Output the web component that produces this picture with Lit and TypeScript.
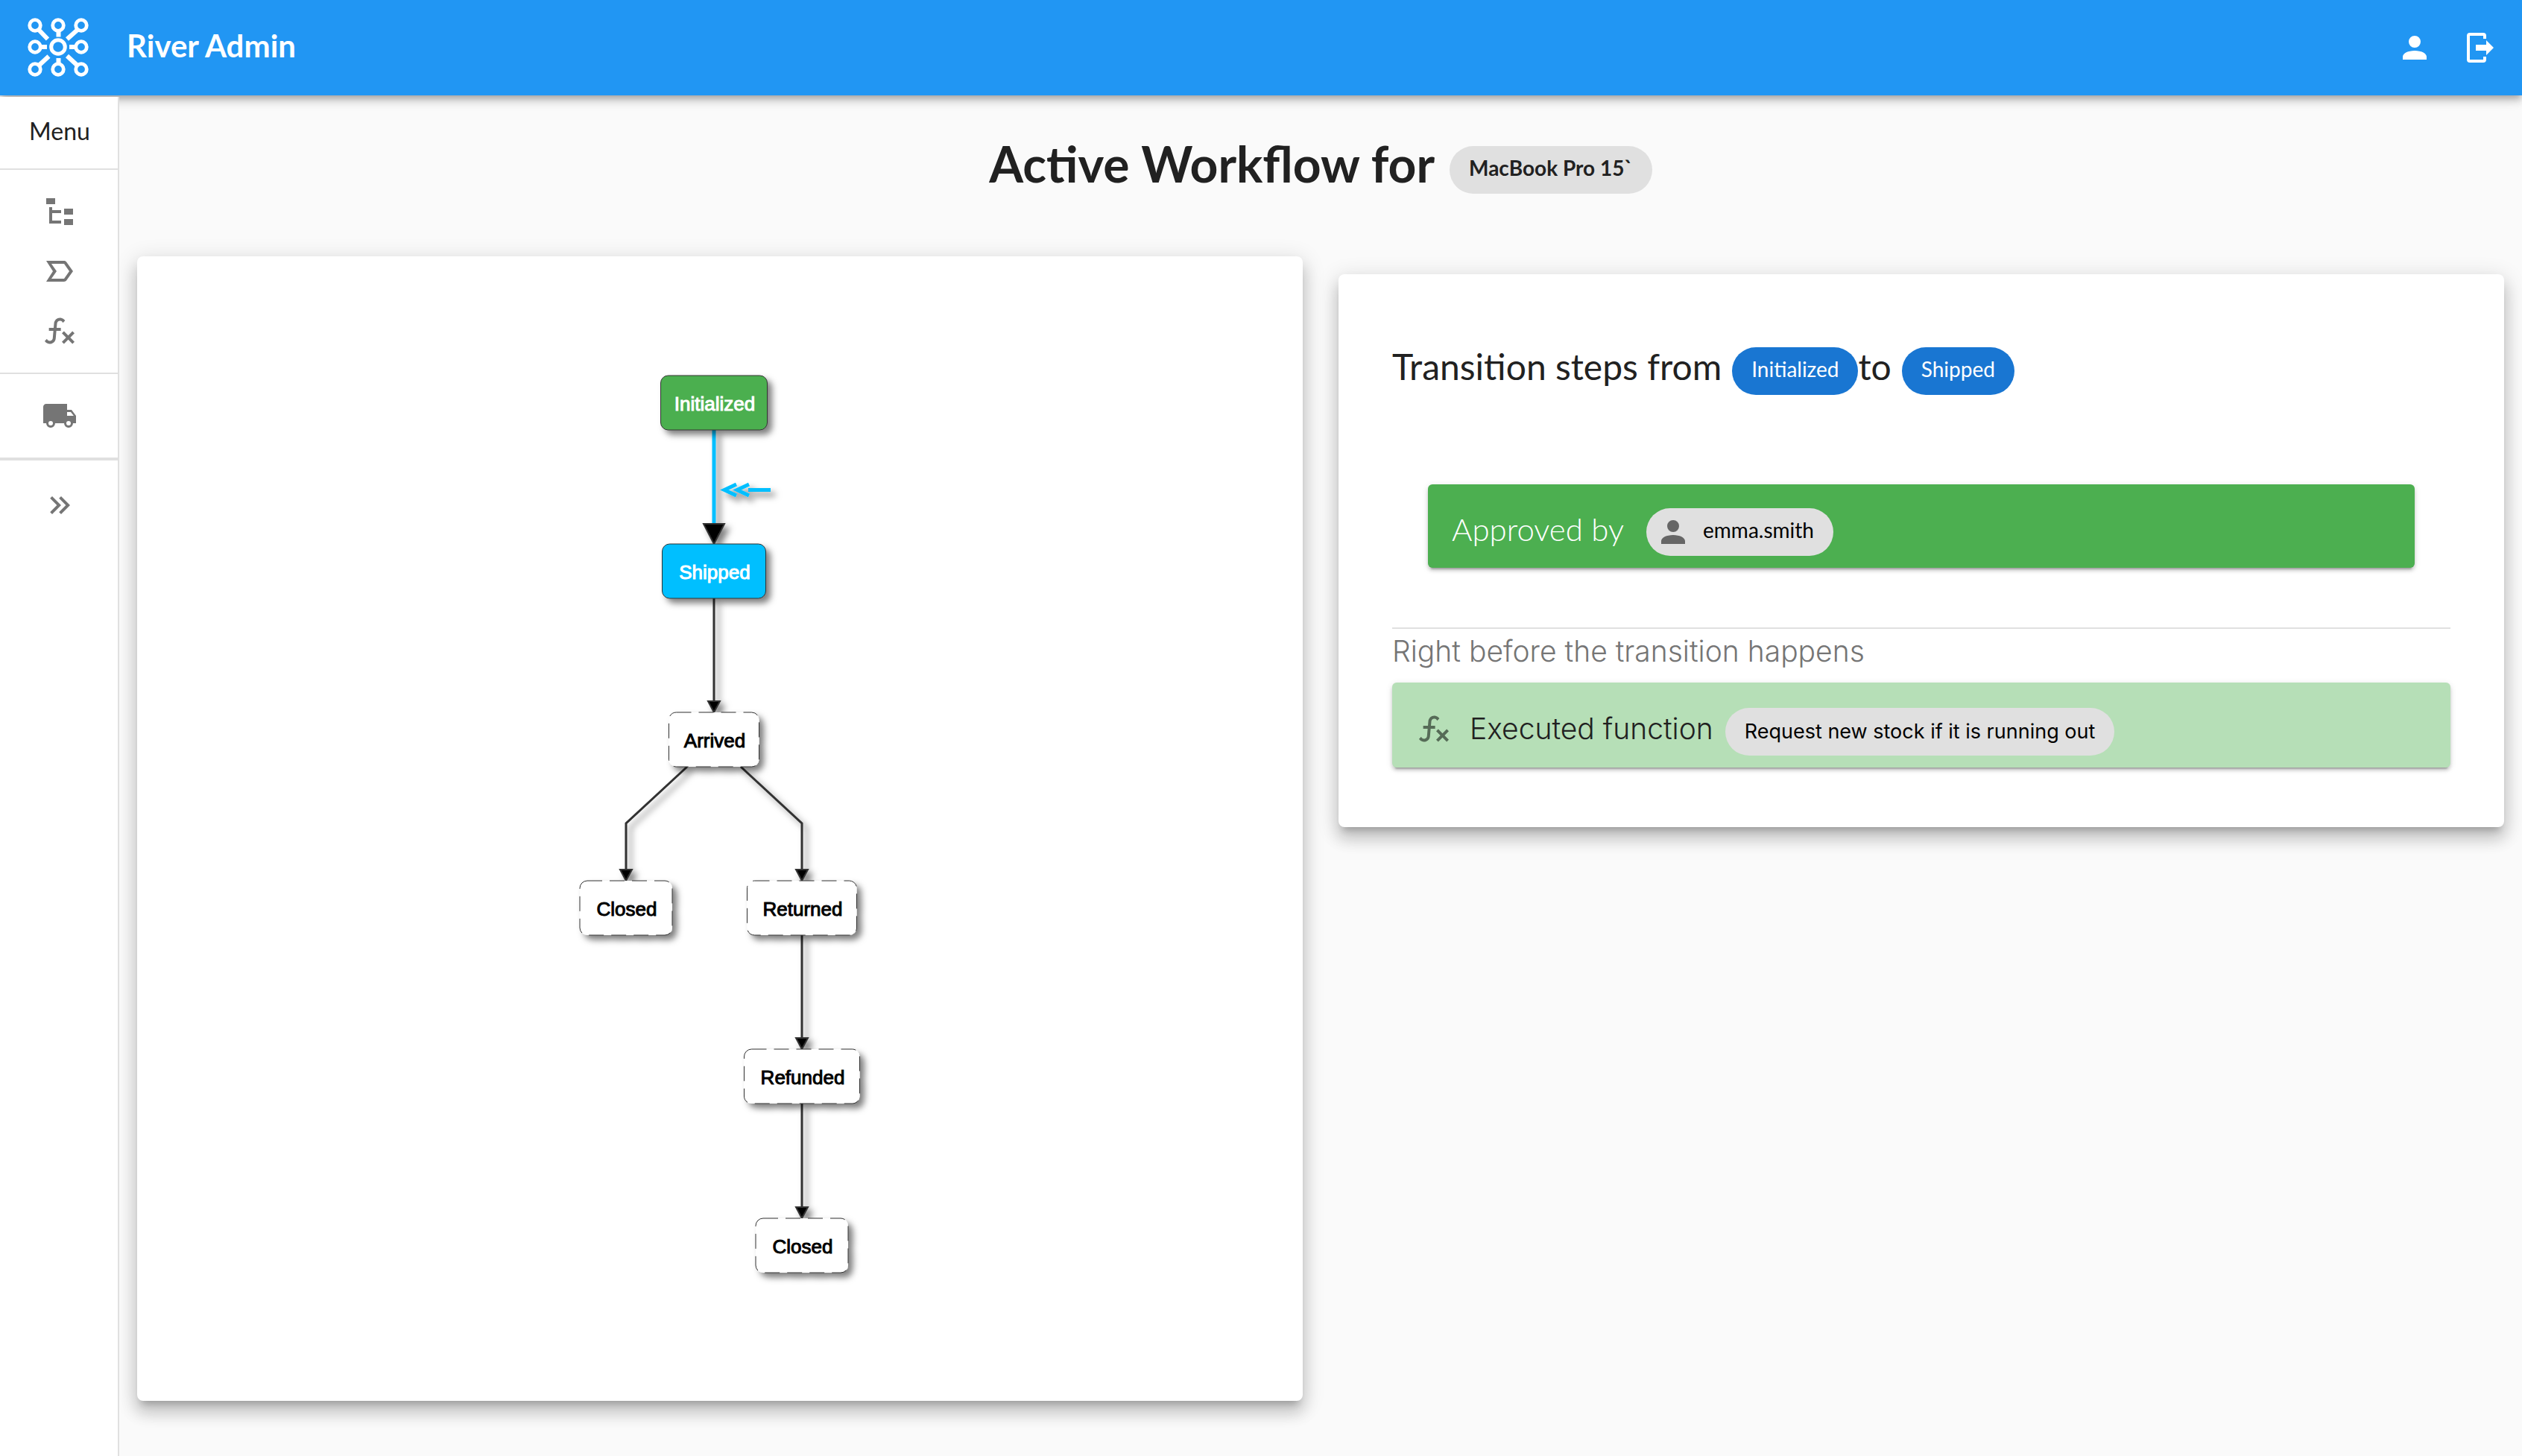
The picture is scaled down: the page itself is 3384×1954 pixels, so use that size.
import { LitElement, html, svg, css } from "lit";
import { customElement, property } from "lit/decorators.js";
import { classMap } from "lit/directives/class-map.js";

const ICONS = {
  account:
    "M12,4A4,4 0 0,1 16,8A4,4 0 0,1 12,12A4,4 0 0,1 8,8A4,4 0 0,1 12,4M12,14C16.42,14 20,15.79 20,18V20H4V18C4,15.79 7.58,14 12,14Z",
  logout:
    "M16,17V14H9V10H16V7L21,12L16,17M14,2A2,2 0 0,1 16,4V6H14V4H5V20H14V18H16V20A2,2 0 0,1 14,22H5A2,2 0 0,1 3,20V4A2,2 0 0,1 5,2H14Z",
  tree: "M3,3H9V7H3V3M15,10H21V14H15V10M15,17H21V21H15V17M13,13H7V18H13V20H5V9H7V11H13V13Z",
  label:
    "M3,5H15C15.65,5 16.26,5.31 16.63,5.84L21,12L16.63,18.16C16.26,18.69 15.65,19 15,19H3L7.5,12L3,5M6.5,7L10,12L6.5,17H15L18.5,12L15,7H6.5Z",
  fn: "M12.42,5.29C11.32,5.19 10.35,6 10.25,7.11L10,10H12.82V12H9.82L9.38,17.07C9.18,19.27 7.24,20.9 5.04,20.7C3.79,20.59 2.66,19.9 2,18.83L3.5,17.33C3.83,18.38 4.96,18.97 6,18.63C6.78,18.39 7.33,17.7 7.4,16.89L7.82,12H4.82V10H8L8.27,6.93C8.46,4.73 10.39,3.1 12.6,3.28C13.86,3.39 15,4.09 15.66,5.17L14.16,6.67C13.91,5.9 13.23,5.36 12.42,5.29M22,13.65L20.59,12.24L17.76,15.07L14.93,12.24L13.5,13.65L16.35,16.5L13.5,19.33L14.93,20.74L17.76,17.91L20.59,20.74L22,19.33L19.17,16.5L22,13.65Z",
  truck:
    "M18,18.5A1.5,1.5 0 0,0 19.5,17A1.5,1.5 0 0,0 18,15.5A1.5,1.5 0 0,0 16.5,17A1.5,1.5 0 0,0 18,18.5M19.5,9.5H17V12H21.46L19.5,9.5M6,18.5A1.5,1.5 0 0,0 7.5,17A1.5,1.5 0 0,0 6,15.5A1.5,1.5 0 0,0 4.5,17A1.5,1.5 0 0,0 6,18.5M20,8L23,12V17H21A3,3 0 0,1 18,20A3,3 0 0,1 15,17H9A3,3 0 0,1 6,20A3,3 0 0,1 3,17H1V6C1,4.89 1.89,4 3,4H17V8H20Z",
  expand:
    "M5.59,7.41L7,6L13,12L7,18L5.59,16.59L10.17,12L5.59,7.41M11.59,7.41L13,6L19,12L13,18L11.59,16.59L16.17,12L11.59,7.41Z",
};
type IconName = keyof typeof ICONS;

const icon = (name: IconName) => html`<svg class="icon" viewBox="0 0 24 24" aria-hidden="true">
  <path fill="currentColor" fill-rule="evenodd" d=${ICONS[name]} />
</svg>`;

interface FlowNode {
  label: string;
  x: number;
  y: number;
  w: number;
  kind: "done" | "current" | "pending";
}
interface FlowEdge {
  d: string;
  tip: [number, number];
  active?: boolean;
}

const NODE_HEIGHT = 73;
const NODES: FlowNode[] = [
  { label: "Initialized", x: 774, y: 160, w: 143, kind: "done" },
  { label: "Shipped", x: 774, y: 386, w: 139, kind: "current" },
  { label: "Arrived", x: 774, y: 612, w: 121, kind: "pending" },
  { label: "Closed", x: 656, y: 838, w: 124, kind: "pending" },
  { label: "Returned", x: 892, y: 838, w: 147, kind: "pending" },
  { label: "Refunded", x: 892, y: 1064, w: 155, kind: "pending" },
  { label: "Closed", x: 892, y: 1291, w: 124, kind: "pending" },
];
const EDGES: FlowEdge[] = [
  { d: "M774,233V360", tip: [774, 386], active: true },
  { d: "M774,459V598", tip: [774, 612] },
  { d: "M738,685L656,761V824", tip: [656, 838] },
  { d: "M810,685L892,761V824", tip: [892, 838] },
  { d: "M892,911V1050", tip: [892, 1064] },
  { d: "M892,1137V1276", tip: [892, 1291] },
];

@customElement("workflow-graph")
export class WorkflowGraph extends LitElement {
  @property({ attribute: false }) nodes: FlowNode[] = [];
  @property({ attribute: false }) edges: FlowEdge[] = [];

  static styles = css`
    :host {
      display: block;
    }
    .canvas {
      display: block;
      width: 100%;
      height: auto;
    }
    .edge {
      fill: none;
      stroke: #333;
      stroke-width: 3px;
    }
    .edge.active,
    .marker {
      fill: none;
      stroke: #00bfff;
      stroke-width: 5px;
    }
    .head {
      fill: #000;
      stroke: #333;
      stroke-width: 2px;
    }
    .box {
      stroke: #333;
      stroke-width: 1px;
    }
    .done .box {
      fill: #4caf50;
    }
    .current .box {
      fill: #00bfff;
    }
    .pending .box {
      fill: #fff;
      stroke-dasharray: 20 10;
    }
    .label {
      font: 400 26px "Liberation Sans", Arial, sans-serif;
      text-anchor: middle;
      fill: #000;
      stroke: #000;
      stroke-width: 1px;
    }
    .done .label,
    .current .label {
      fill: #fff;
      stroke: #fff;
    }
  `;

  private edge({ d, tip: [x, y], active }: FlowEdge) {
    const half = active ? 14 : 8;
    const length = active ? 27 : 15;
    return svg`<g filter="url(#shadow)">
      <path class=${classMap({ edge: true, active: !!active })} d=${d}></path>
      <path class="head" d=${`M${x - half},${y - length}H${x + half}L${x},${y}Z`}></path>
    </g>`;
  }

  private node({ label, x, y, w, kind }: FlowNode) {
    return svg`<g class=${kind}>
      <rect class="box" filter="url(#shadow)" x=${x - w / 2} y=${y} width=${w} height=${NODE_HEIGHT} rx="10"></rect>
      <text class="label" x=${x + 1} y=${y + 47}>${label}</text>
    </g>`;
  }

  render() {
    return html`<svg class="canvas" viewBox="0 0 1564 1536" role="img" aria-label="Workflow">
      <defs>
        <filter id="shadow" filterUnits="userSpaceOnUse" x="0" y="0" width="1564" height="1536">
          <feDropShadow dx="6" dy="6" stdDeviation="4" flood-color="#000" flood-opacity="0.5" />
        </filter>
      </defs>
      ${this.edges.map((e) => this.edge(e))}
      <g filter="url(#shadow)">
        <path class="marker" d="M804,306L788,313.500L804,321M821,306L805,313.500L821,321M820,313.500H850"></path>
      </g>
      ${this.nodes.map((n) => this.node(n))}
    </svg>`;
  }
}

@customElement("app-root")
export class AppRoot extends LitElement {
  static styles = css`
    :host {
      display: flex;
      flex-direction: column;
      min-height: 100vh;
      background: #fafafa;
      color: #212121;
      font-family: Lato, "Open Sans", sans-serif;
      font-size: 32px;
    }
    * {
      box-sizing: border-box;
    }
    h1,
    h2,
    h3 {
      margin: 0;
      font-weight: 400;
    }
    button {
      display: flex;
      padding: 0;
      border: 0;
      background: none;
      color: inherit;
      cursor: pointer;
    }
    .icon {
      display: block;
      flex: none;
      width: 48px;
      height: 48px;
    }

    .topbar {
      position: relative;
      z-index: 1;
      display: flex;
      align-items: center;
      height: 128px;
      padding: 0 32px;
      background: #2196f3;
      color: #fff;
      box-shadow: 0 4px 8px -2px rgba(0, 0, 0, 0.2), 0 8px 10px 0 rgba(0, 0, 0, 0.14),
        0 2px 20px 0 rgba(0, 0, 0, 0.12);
    }
    .logo {
      display: block;
      width: 92px;
      height: 92px;
    }
    .brand {
      flex: 1;
      padding: 0 0 6px 46px;
      font-size: 42px;
      font-weight: 700;
      line-height: 64px;
    }
    .actions {
      display: flex;
      gap: 40px;
    }

    .body {
      display: flex;
      flex: 1;
    }
    .sidebar {
      position: relative;
      z-index: 2;
      flex: none;
      width: 160px;
      margin-top: 2px;
      border-right: 2px solid #e0e0e0;
      background: #fff;
    }
    .menu-title {
      height: 98px;
      padding: 0 0 4px 2px;
      border-bottom: 2px solid #e0e0e0;
      line-height: 92px;
      text-align: center;
    }
    .menu-group {
      padding: 16px 0;
      border-bottom: 2px solid #e0e0e0;
      color: #757575;
    }
    .menu-group.last {
      border-bottom-width: 4px;
    }
    .menu-item {
      display: flex;
      align-items: center;
      justify-content: center;
      height: 80px;
      padding-left: 2px;
      color: inherit;
    }
    .expand {
      align-items: center;
      justify-content: center;
      width: 100%;
      height: 120px;
      padding-left: 2px;
      color: #757575;
    }

    .main {
      flex: 1;
      min-width: 0;
      padding: 52px 24px 72px;
    }
    .title {
      display: flex;
      align-items: center;
      justify-content: center;
      gap: 20px;
      margin-bottom: 68px;
      font-size: 66px;
      font-weight: 700;
    }
    .title-text {
      padding-bottom: 16px;
      line-height: 80px;
    }
    .columns {
      display: grid;
      grid-template-columns: 1fr 1fr;
      align-items: start;
      gap: 48px;
    }
    .card {
      border-radius: 8px;
      background: #fff;
      box-shadow: 0 10px 10px -6px rgba(0, 0, 0, 0.2), 0 16px 20px 2px rgba(0, 0, 0, 0.14),
        0 6px 28px 4px rgba(0, 0, 0, 0.12);
    }
    .details {
      margin-top: 24px;
      padding: 94px 72px 80px;
    }

    .chip {
      display: inline-flex;
      align-items: center;
      height: 64px;
      padding: 0 26px;
      border-radius: 32px;
      background: #e0e0e0;
      color: #212121;
      font-size: 28px;
      line-height: 32px;
    }
    .chip-text {
      padding-bottom: 6px;
    }
    .chip.primary {
      background: #1976d2;
      color: #fff;
    }
    .chip.user {
      gap: 16px;
      padding-left: 12px;
      color: #000;
    }
    .chip.user .icon {
      color: #666;
    }
    .chip.function {
      color: #000;
      font-size: 27px;
    }

    .steps {
      display: flex;
      align-items: center;
      font-size: 48px;
    }
    .steps-text {
      padding: 0 14px 12px 0;
      line-height: 60px;
    }
    .bar {
      display: flex;
      align-items: center;
      border-radius: 6px;
      box-shadow: 0 6px 2px -4px rgba(0, 0, 0, 0.2), 0 4px 4px 0 rgba(0, 0, 0, 0.14),
        0 2px 10px 0 rgba(0, 0, 0, 0.12);
    }
    .approval {
      gap: 30px;
      margin: 116px 48px 80px;
      padding: 32px 32px 16px;
      background: #4caf50;
      color: #fff;
      font-size: 42px;
      font-weight: 300;
    }
    .approval-text {
      padding-bottom: 8px;
      line-height: 48px;
    }
    .approval .chip {
      font-weight: 400;
    }
    .hook {
      border-top: 2px solid #e0e0e0;
      font-family: Inter, "Liberation Sans", sans-serif;
    }
    .hook-title {
      margin-bottom: 12px;
      color: #757575;
      font-size: 39px;
      font-weight: 300;
      line-height: 60px;
    }
    .executed {
      padding: 34px 32px 16px;
      background: #b6dfb7;
    }
    .executed-text {
      display: flex;
      align-items: center;
      gap: 24px;
      padding: 0 16px 8px 0;
      font-size: 39px;
      font-weight: 300;
      line-height: 48px;
    }
    .executed-text .icon {
      color: #566b57;
    }
  `;

  private logo() {
    const rings = [
      [11, 10], [42, 10], [73, 10],
      [11, 39], [73, 39],
      [11, 69], [42, 69], [73, 69],
    ];
    return html`<svg class="logo" viewBox="-4 -6 92 92" aria-hidden="true">
      <g fill="none" stroke="#fff">
        ${rings.map(([x, y]) => svg`<circle cx=${x} cy=${y} r="7.300" stroke-width="4.800"></circle>`)}
        <circle cx="42" cy="39" r="9.300" stroke-width="5"></circle>
        <path
          stroke-width="6"
          d="M42.500,16V25.500M42.500,54V63M17,39H27M57,39H67M16,16L28,28.500M68,16L54,28.500M16.500,63.500L29.500,51.500M68,64L54,51"
        />
      </g>
    </svg>`;
  }

  private menuItem(name: IconName, label: string) {
    return html`<a class="menu-item" href="#" aria-label=${label}>${icon(name)}</a>`;
  }

  render() {
    return html`
      <header class="topbar">
        ${this.logo()}
        <div class="brand">River Admin</div>
        <div class="actions">
          <button type="button" aria-label="Account">${icon("account")}</button>
          <button type="button" aria-label="Log out">${icon("logout")}</button>
        </div>
      </header>
      <div class="body">
        <nav class="sidebar">
          <div class="menu-title">Menu</div>
          <div class="menu-group">
            ${this.menuItem("tree", "Workflows")} ${this.menuItem("label", "States")}
            ${this.menuItem("fn", "Functions")}
          </div>
          <div class="menu-group last">${this.menuItem("truck", "Shipping")}</div>
          <button class="expand" type="button" aria-label="Expand menu">${icon("expand")}</button>
        </nav>
        <main class="main">
          <h1 class="title">
            <span class="title-text">Active Workflow for</span>
            <span class="chip"><span class="chip-text">MacBook Pro 15\`</span></span>
          </h1>
          <div class="columns">
            <section class="card">
              <workflow-graph .nodes=${NODES} .edges=${EDGES}></workflow-graph>
            </section>
            <section class="card details">
              <h2 class="steps">
                <span class="steps-text">Transition steps from</span>
                <span class="chip primary"><span class="chip-text">Initialized</span></span>
                <span class="steps-text">to</span>
                <span class="chip primary"><span class="chip-text">Shipped</span></span>
              </h2>
              <div class="bar approval">
                <span class="approval-text">Approved by</span>
                <span class="chip user">${icon("account")}<span class="chip-text">emma.smith</span></span>
              </div>
              <div class="hook">
                <h3 class="hook-title">Right before the transition happens</h3>
                <div class="bar executed">
                  <span class="executed-text">${icon("fn")}<span>Executed function</span></span>
                  <span class="chip function">Request new stock if it is running out</span>
                </div>
              </div>
            </section>
          </div>
        </main>
      </div>
    `;
  }
}
